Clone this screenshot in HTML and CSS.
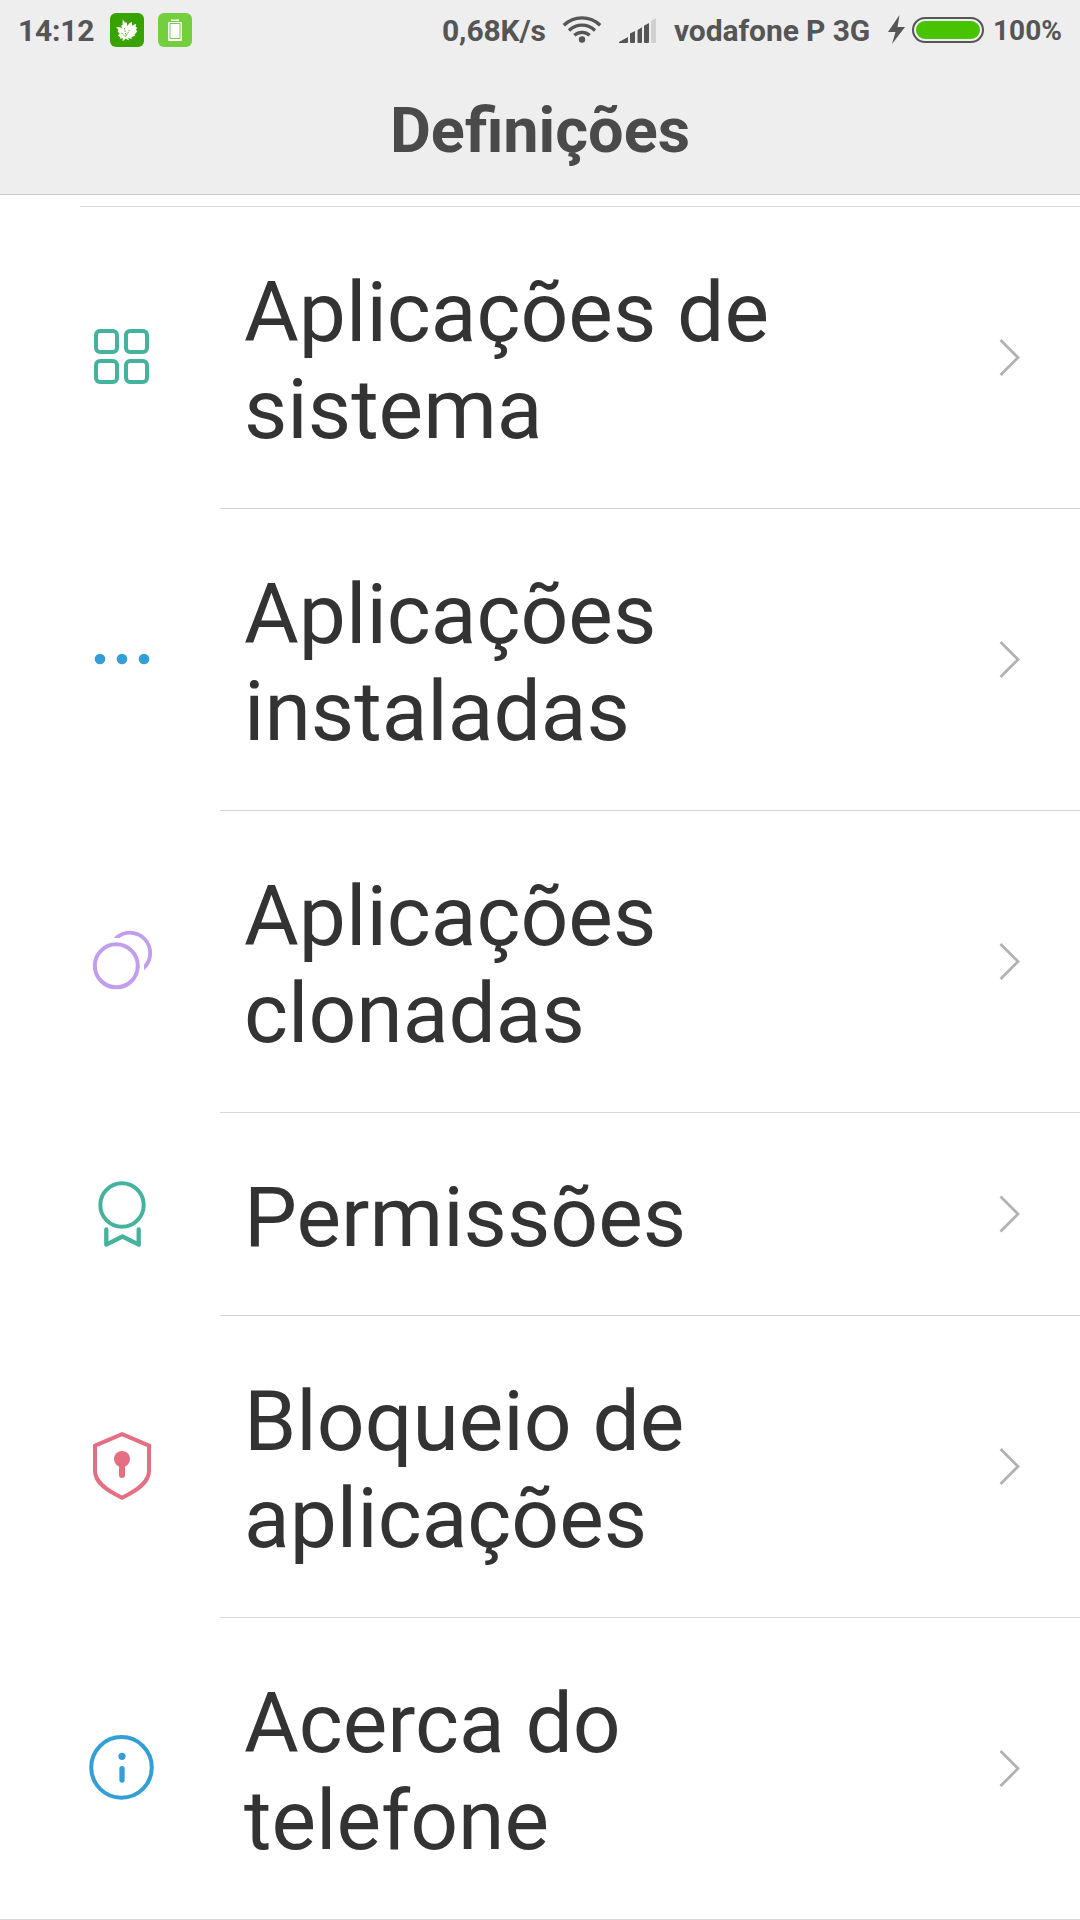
FILE: index.html
```html
<!DOCTYPE html>
<html lang="pt">
<head>
<meta charset="utf-8">
<title>Definições</title>
<link rel="stylesheet" href="styles.css">
</head>
<body>
<header class="header">
  <div class="status">
    <span class="clock">14:12</span>
    <svg class="app-badge" viewBox="0 0 34 34"><rect width="34" height="34" rx="6" fill="#38a300"/><path fill="#fff" d="M12.700 6.500l2.300 3 1.500-.3 1 3.800L19 10.500l2.800-1.800.4 4L25 11.200l1-.5-.3 3.300 1.500.8-1.200 2 1.300 1.700-2.800 3 .8 1.200-4 1.500.8 1.800-4.500-.9 1.500 1.700-.8.400-2.800-1.700-1.200 1.800-2 .7.700-2.800-3.200.4.300-1.600L7.800 22.500l1.900-1.800-2.200-2.500 1.100-1.200L6 14l4.300.3 1.800 1.400-.9-3.700 1.300.2z"/><path stroke="#38a300" stroke-width=".8" stroke-dasharray="1.500 1" fill="none" d="M14.500 15l1.500 8M19.500 17l-4 7M11.500 20l4 4"/></svg>
    <svg class="app-badge battery-badge" viewBox="0 0 34 34"><rect width="34" height="34" rx="6" fill="#73cf3e"/><path fill="#fff" d="M13 6.500h8V8h-8zM11 9h12a1 1 0 0 1 1 1v17a1 1 0 0 1-1 1H11a1 1 0 0 1-1-1V10a1 1 0 0 1 1-1z"/><path stroke="#73cf3e" fill="none" d="M12 10.500h10v15H12z"/></svg>
    <span class="speed">0,68K/s</span>
    <svg class="wifi" viewBox="0 0 40 28" fill="none" stroke="#555" stroke-width="3.300"><path d="M1.800 10.300a26 26 0 0 1 36.400 0M7 15.500a18.600 18.600 0 0 1 26 0M12.300 20.300a11.500 11.500 0 0 1 15.400 0"/><circle cx="20" cy="24.500" r="3.200" fill="#555" stroke="none"/></svg>
    <svg class="signal" viewBox="0 0 38 26" fill="#555"><path d="M0 25v-1l9-5v5q0 1-1 1zM11 15.500l5-2.500V24q0 1-1 1h-3q-1 0-1-1zM18.500 12l4.500-2.700V24q0 1-1 1h-2.500q-1 0-1-1zM25 7.700L30 5v19q0 1-1 1h-3q-1 0-1-1z"/><path fill="#d0d0d0" d="M32 3l5-3v25h-4q-1 0-1-1z"/></svg>
    <span class="carrier">vodafone P 3G</span>
    <svg class="bolt" viewBox="0 0 18 30"><path fill="#555" d="M11.500 0L0 17h7.500L4 29 17 12H9.500z"/></svg>
    <span class="battery"><span class="battery-level"></span></span>
    <span class="percent">100%</span>
  </div>
  <h1 class="title">Definições</h1>
</header>
<main class="list">
  <div class="row">
    <svg class="icon" viewBox="0 0 120 120" fill="none" stroke="#45b29d" stroke-width="4"><rect x="36" y="33" width="21" height="21" rx="4"/><rect x="66" y="33" width="21" height="21" rx="4"/><rect x="36" y="63" width="21" height="21" rx="4"/><rect x="66" y="63" width="21" height="21" rx="4"/></svg>
    <div class="cell"><span class="label">Aplicações de sistema</span><svg class="chevron" viewBox="0 0 22 38"><path d="M1.500 2L19 19.500 1.500 37"/></svg></div>
  </div>
  <div class="row">
    <svg class="icon" viewBox="0 0 120 120" fill="#349fd6"><circle cx="40" cy="59" r="5.300"/><circle cx="62" cy="59" r="5.300"/><circle cx="84" cy="59" r="5.300"/></svg>
    <div class="cell"><span class="label">Aplicações instaladas</span><svg class="chevron" viewBox="0 0 22 38"><path d="M1.500 2L19 19.500 1.500 37"/></svg></div>
  </div>
  <div class="row">
    <svg class="icon" viewBox="0 0 120 120"><circle cx="56.300" cy="63.800" r="21.500" fill="none" stroke="#c09eed" stroke-width="4"/><path fill="#c09eed" d="M53.400 36A22.300 22.300 0 1 1 84 68.300V62.700A18.300 18.300 0 0 0 59.400 36z"/></svg>
    <div class="cell"><span class="label">Aplicações clonadas</span><svg class="chevron" viewBox="0 0 22 38"><path d="M1.500 2L19 19.500 1.500 37"/></svg></div>
  </div>
  <div class="row row-single">
    <svg class="icon" viewBox="0 0 120 120" fill="none" stroke="#45b29d" stroke-width="4.300" stroke-linecap="round" stroke-linejoin="round"><circle cx="62" cy="50" r="21.700" stroke-width="4"/><path d="M46.300 74.500V89.700L62.500 81.500 78.700 89.700V74.500"/></svg>
    <div class="cell"><span class="label">Permissões</span><svg class="chevron" viewBox="0 0 22 38"><path d="M1.500 1.500L19 19 1.500 36.500"/></svg></div>
  </div>
  <div class="row">
    <svg class="icon" viewBox="0 0 120 120"><path fill="none" stroke="#e46e82" stroke-width="4" d="M62 27.200L89 38.600V64c0 11.500-12 19.500-27 26.700C47 83.500 35 75.500 35 64V38.600z"/><path stroke="#e46e82" stroke-width="6" stroke-linecap="round" d="M62 52v16"/><circle cx="62" cy="52" r="8" fill="#e46e82"/></svg>
    <div class="cell"><span class="label">Bloqueio de aplicações</span><svg class="chevron" viewBox="0 0 22 38"><path d="M1.500 2L19 19.500 1.500 37"/></svg></div>
  </div>
  <div class="row row-last">
    <svg class="icon" viewBox="0 0 120 120"><circle cx="61.500" cy="58.400" r="30.300" fill="none" stroke="#349fd6" stroke-width="4"/><circle cx="62" cy="47.300" r="3.600" fill="#349fd6"/><path stroke="#349fd6" stroke-width="5.300" stroke-linecap="round" d="M62 59.700v11.300"/></svg>
    <div class="cell"><span class="label">Acerca do telefone</span><svg class="chevron" viewBox="0 0 22 38"><path d="M1.500 2L19 19.500 1.500 37"/></svg></div>
  </div>
</main>
</body>
</html>
```
FILE: styles.css
```css
* { box-sizing: border-box; }
body {
  margin: 0;
  width: 1080px;
  height: 1920px;
  overflow: hidden;
  background: #fff;
  font-family: Roboto, "Noto Sans", sans-serif;
  color: #333;
}
svg { display: block; flex: none; }
.header {
  height: 195px;
  background: #eee;
  border-bottom: 1px solid #c8c8c8;
}
.status {
  display: flex;
  align-items: flex-start;
  height: 60px;
  padding: 13px 0 0 18px;
  font-size: 30px;
  line-height: 35px;
  font-weight: 700;
  color: #555;
  white-space: nowrap;
}
.status > * { flex: none; }
.clock { width: 92px; letter-spacing: -0.2px; }
.app-badge { width: 34px; height: 34px; }
.battery-badge { margin-left: 14px; }
.speed { margin-left: 250px; width: 120px; letter-spacing: -0.1px; }
.wifi { width: 40px; height: 28px; margin-top: 2px; }
.signal { width: 38px; height: 26px; margin: 5px 0 0 17px; }
.carrier { margin-left: 17px; width: 214px; letter-spacing: -0.1px; }
.bolt { width: 18px; height: 30px; margin-top: 2px; }
.battery {
  width: 72px;
  height: 26px;
  margin: 4px 0 0 6px;
  padding: 2px;
  border: 2px solid #555;
  border-radius: 13px;
}
.battery-level {
  display: block;
  height: 18px;
  border-radius: 9px;
  background: #48c300;
}
.percent { margin-left: 9px; font-size: 28px; }
.title {
  margin: 34px 0 0;
  font-size: 63px;
  line-height: 74px;
  font-weight: 700;
  text-align: center;
  color: #4a4a4a;
}
.list { padding-top: 11px; }
.list::before {
  content: "";
  display: block;
  height: 1px;
  margin-left: 80px;
  background: #d8d8d8;
}
.row { display: flex; height: 302px; align-items: center; }
.row-single { height: 203px; }
.row-last { box-shadow: inset 0 -1px #d8d8d8; }
.icon { width: 120px; height: 120px; margin-left: 60px; }
.cell {
  flex: 1;
  align-self: stretch;
  display: flex;
  align-items: center;
  justify-content: space-between;
  margin-left: 40px;
  padding: 0 59px 0 24px;
  border-bottom: 1px solid #d8d8d8;
}
.label { width: 560px; padding-top: 6px; font-size: 84px; line-height: 97px; }
.chevron {
  width: 22px;
  height: 38px;
  margin-bottom: 1px;
  fill: none;
  stroke: #b2b2b2;
  stroke-width: 2.8;
}
```
